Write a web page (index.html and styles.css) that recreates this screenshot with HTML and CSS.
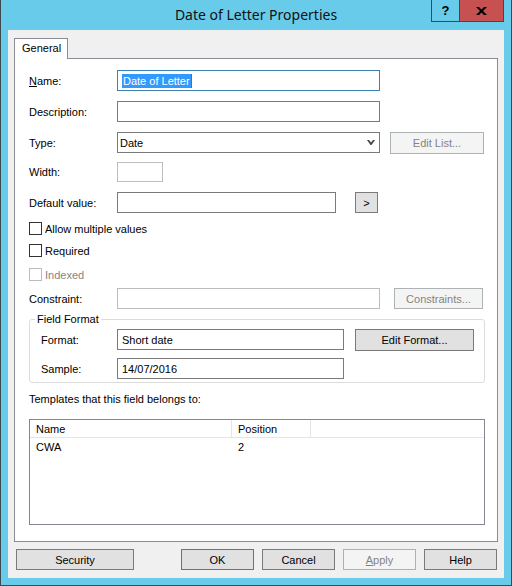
FILE: index.html
```html
<!DOCTYPE html>
<html>
<head>
<meta charset="utf-8">
<link rel="stylesheet" href="styles.css">
</head>
<body>
<div class="window">
  <div class="titlebar">
    <span class="title">Date of Letter Properties</span>
    <div class="controls">
      <span class="ctl help">?</span>
      <span class="ctl close"><svg width="11" height="8" viewBox="0 0 11 8"><path d="M0 0h3l2.5 2.5L8 0h3L7 4l4 4H8L5.5 5.5 3 8H0l4-4z" fill="#000"/></svg></span>
    </div>
  </div>
  <div class="client">
    <div class="tabs"><div class="tab">General</div></div>
    <div class="panel">
      <div class="row r-name">
        <span class="lbl"><u>N</u>ame:</span>
        <div class="field focus w-long"><span class="sel">Date of Letter</span></div>
      </div>
      <div class="row r-desc">
        <span class="lbl">Description:</span>
        <div class="field w-long"></div>
      </div>
      <div class="row r-type">
        <span class="lbl">Type:</span>
        <div class="field select w-long"><span>Date</span>
          <svg class="arrow" width="8" height="5" viewBox="0 0 8 5"><path d="M0 0h2l2 2.5L6 0h2L4.5 5h-1z" fill="#444"/></svg>
        </div>
        <div class="btn disabled b-editlist">Edit List...</div>
      </div>
      <div class="row r-width">
        <span class="lbl">Width:</span>
        <div class="field disabled w-width"></div>
      </div>
      <div class="row r-default">
        <span class="lbl">Default value:</span>
        <div class="field w-default"></div>
        <div class="btn b-more">&gt;</div>
      </div>
      <div class="check r-allow"><span class="box"></span><span>Allow multiple values</span></div>
      <div class="check r-req"><span class="box"></span><span>Required</span></div>
      <div class="check disabled r-idx"><span class="box"></span><span>Indexed</span></div>
      <div class="row r-con">
        <span class="lbl">Constraint:</span>
        <div class="field disabled w-long"></div>
        <div class="btn disabled b-cons">Constraints...</div>
      </div>
      <fieldset class="group">
        <legend>Field Format</legend>
        <div class="grow g-format">
          <span class="glbl">Format:</span>
          <div class="field w-fmt"><span>Short date</span></div>
          <div class="btn b-fmt">Edit Format...</div>
        </div>
        <div class="grow g-sample">
          <span class="glbl">Sample:</span>
          <div class="field w-fmt"><span>14/07/2016</span></div>
        </div>
      </fieldset>
      <div class="tpl">Templates that this field belongs to:</div>
      <div class="list">
        <div class="lhead">
          <div class="hc c1">Name</div>
          <div class="hc c2">Position</div>
          <div class="hc c3"></div>
        </div>
        <div class="lrow">
          <div class="cell c1">CWA</div>
          <div class="cell c2">2</div>
        </div>
      </div>
    </div>
    <div class="buttons">
      <div class="btn b-sec">Security</div>
      <div class="spacer"></div>
      <div class="btn default b-std">OK</div>
      <div class="btn b-std">Cancel</div>
      <div class="btn disabled b-std"><u>A</u>pply</div>
      <div class="btn b-std">Help</div>
    </div>
  </div>
</div>
</body>
</html>
```
FILE: styles.css
```css
* { box-sizing: border-box; }
html, body { margin: 0; padding: 0; }
body {
  width: 512px;
  height: 586px;
  overflow: hidden;
  font-family: "Liberation Sans", Arial, sans-serif;
  font-size: 11px;
  color: #000;
}
.window {
  width: 512px;
  height: 586px;
  background: #69cbea;
  border: 1px solid #3c4a52;
  border-top: 0;
  padding: 0 7px 7px 7px;
  display: flex;
  flex-direction: column;
  position: relative;
}
.titlebar {
  height: 30px;
  flex: none;
  display: flex;
  align-items: center;
  justify-content: center;
  padding-bottom: 1px;
}
.title {
  font-family: "Noto Sans", "Open Sans", sans-serif;
  font-size: 14px;
  color: #111;
}
.controls {
  position: absolute;
  top: 0;
  right: 7px;
  display: flex;
}
.ctl {
  height: 22px;
  border: 1px solid #2f4e5e;
  border-top: 0;
  display: flex;
  align-items: center;
  justify-content: center;
}
.help {
  width: 28px;
  border-right: 0;
  font-weight: bold;
  font-size: 13px;
  padding-bottom: 1px;
}
.close {
  width: 45px;
  background: #c75050;
}
.client {
  flex: 1;
  background: #f0f0f0;
  padding: 8px 6px 8px 6px;
  display: flex;
  flex-direction: column;
}
.tabs {
  display: flex;
  flex: none;
  height: 20px;
}
.tab {
  position: relative;
  z-index: 1;
  width: 54px;
  height: 21px;
  background: #fff;
  border: 1px solid #898c95;
  border-bottom: 0;
  padding: 3px 0 0 7px;
}
.panel {
  flex: 1;
  background: #fff;
  border: 1px solid #898c95;
  padding: 11px 13px 16px 14px;
  display: flex;
  flex-direction: column;
}
.row {
  display: flex;
  align-items: center;
  height: 21px;
  flex: none;
}
.lbl {
  width: 88px;
  flex: none;
}
.field {
  height: 21px;
  border: 1px solid #7a7a7a;
  background: #fff;
  display: flex;
  align-items: center;
  padding-left: 4px;
  flex: none;
}
.field.focus { border-color: #3c7fb1; }
.field.disabled { border-color: #bcbcbc; }
.sel {
  background: #3399ff;
  color: #fff;
  line-height: 14px;
  padding: 0 1px 0 1px;
  border-right: 1px solid #b05a10;
}
.w-long { width: 263px; }
.w-width { width: 46px; height: 20px; }
.w-default { width: 219px; }
.w-fmt { width: 227px; }
.select {
  padding-left: 2px;
  justify-content: space-between;
  padding-right: 4px;
}
.r-desc { margin-top: 10px; }
.r-type { margin-top: 10px; }
.r-width { margin-top: 9px; height: 20px; }
.r-default { margin-top: 10px; }
.btn {
  height: 21px;
  background: #e1e1e1;
  border: 1px solid #7a7a7a;
  display: flex;
  align-items: center;
  justify-content: center;
  flex: none;
}
.btn.disabled {
  background: #f4f4f4;
  border-color: #adb2b5;
  color: #838383;
}
.btn.default { border-color: #3c7fb1; }
.b-editlist { width: 94px; margin-left: 10px; height: 22px; }
.b-more { width: 23px; margin-left: 19px; }
.b-cons { width: 89px; margin-left: 14px; }
.check {
  display: flex;
  align-items: center;
  height: 13px;
  flex: none;
}
.box {
  width: 13px;
  height: 13px;
  border: 1px solid #333;
  background: #fff;
  margin-right: 3px;
}
.check.disabled { color: #838383; }
.check.disabled .box { border-color: #bcbcbc; }
.r-allow { margin-top: 9px; }
.r-req { margin-top: 9px; }
.r-idx { margin-top: 11px; }
.r-con { margin-top: 7px; }
.group {
  margin: 4px 0 0 0;
  padding: 0 0 3px 11px;
  border: 1px solid #dcdcdc;
  border-radius: 3px;
  width: 456px;
  flex: none;
}
.group legend {
  padding: 0 2px;
  margin-left: -6px;
  line-height: 13px;
}
.grow {
  display: flex;
  align-items: center;
  height: 21px;
}
.glbl { width: 76px; flex: none; }
.g-format { margin-top: 3px; }
.g-sample { margin-top: 8px; }
.b-fmt { width: 119px; margin-left: 11px; height: 22px; }
.tpl {
  margin-top: 10px;
  line-height: 13px;
  flex: none;
}
.list {
  margin-top: 13px;
  width: 456px;
  flex: 1;
  border: 1px solid #828790;
  background: #fff;
  display: flex;
  flex-direction: column;
}
.lhead {
  display: flex;
  height: 18px;
  border-bottom: 1px solid #e5e5e5;
  flex: none;
}
.hc {
  height: 17px;
  display: flex;
  align-items: center;
  padding-left: 6px;
  border-right: 1px solid #e5e5e5;
  background: #fff;
}
.c1 { width: 202px; }
.c2 { width: 79px; }
.hc.c3 { flex: 1; border-right: 0; }
.lrow {
  display: flex;
  height: 18px;
  align-items: center;
}
.cell { padding-left: 6px; }
.buttons {
  display: flex;
  flex: none;
  height: 21px;
  margin-top: 7px;
  padding-left: 2px;
  padding-right: 1px;
  gap: 8px;
}
.b-sec { width: 118px; }
.spacer { flex: 1; }
.b-std { width: 73px; }
```
